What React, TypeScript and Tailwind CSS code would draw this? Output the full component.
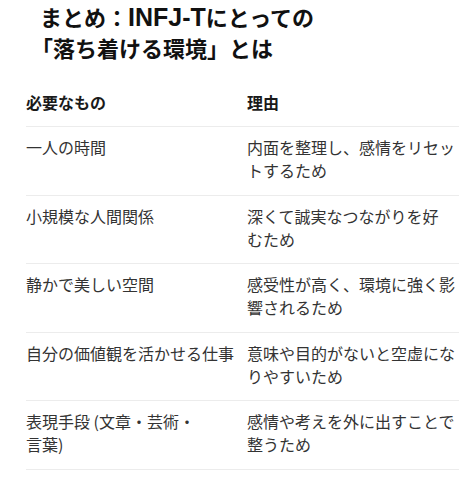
const rows: { need: React.ReactNode; reason: React.ReactNode }[] = [
  { need: '一人の時間', reason: '内面を整理し、感情をリセットするため' },
  {
    need: '小規模な人間関係',
    reason: (
      <>
        深くて誠実なつながりを好
        <br />
        むため
      </>
    ),
  },
  { need: '静かで美しい空間', reason: '感受性が高く、環境に強く影響されるため' },
  { need: '自分の価値観を活かせる仕事', reason: '意味や目的がないと空虚になりやすいため' },
  {
    need: (
      <>
        表現手段 (文章・芸術・
        <br />
        言葉)
      </>
    ),
    reason: '感情や考えを外に出すことで整うため',
  },
];

export default function App() {
  return (
    <div
      className="min-h-[480px] w-[462px] bg-white pl-[26px] pr-[3px]"
      style={{ fontFamily: '"Noto Sans CJK JP", "Noto Sans", sans-serif' }}
    >
      {/* Title */}
      <h2 className="pt-[1px] text-[22px] font-bold leading-[30px] text-[#111]">
        <span className="block pl-[14px]">
          まとめ：
          <span className="font-['Liberation_Sans',sans-serif] text-[25px] leading-[30px]">INFJ-T</span>
          にとっての
        </span>
        <span className="block pl-[5px]">「落ち着ける環境」とは</span>
      </h2>

      {/* Table */}
      <div className="mt-5 text-[16px] leading-[23px]">
        <div className="grid grid-cols-[221px_1fr] border-b border-[#ececec] pt-[9px] pb-[12px] font-bold text-[#1a1a1a]">
          <div>必要なもの</div>
          <div>理由</div>
        </div>
        {rows.map((r, i) => (
          <div
            key={i}
            className="grid grid-cols-[221px_1fr] border-b border-[#ececec] pt-[9px] pb-[12.6px] text-[#333]"
          >
            <div>{r.need}</div>
            <div>{r.reason}</div>
          </div>
        ))}
      </div>
    </div>
  );
}
